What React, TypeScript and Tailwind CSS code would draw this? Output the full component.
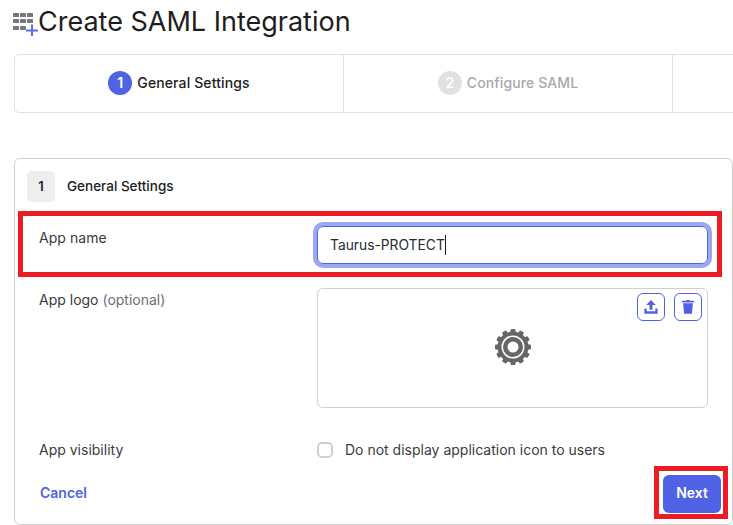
const font = { fontFamily: "Inter, sans-serif" };

function AppsIcon() {
  const cells = [
    [0, 0, 6], [7, 0, 6], [14, 0, 6],
    [0, 6, 6], [7, 6, 6], [14, 6, 6],
    [0, 13, 6], [7, 13, 6],
  ];
  return (
    <svg width="26" height="24" viewBox="0 0 26 24" className="shrink-0">
      {cells.map(([x, y, w], i) => (
        <rect key={i} x={x} y={y + 1} width={w} height="4" rx="0.5" fill="#77777f" />
      ))}
      <path d="M13 17.5h12M19 11.5v12" stroke="#fff" strokeWidth="5" />
      <path d="M13 18.5h12M19 12.5v12" stroke="#5b6be8" strokeWidth="2" />
    </svg>
  );
}

function Gear() {
  const teeth = Array.from({ length: 12 }, (_, i) => i * 30);
  return (
    <svg width="36" height="36" viewBox="0 0 36 36">
      {teeth.map((a) => (
        <rect key={a} x="15.5" y="0" width="5" height="6" rx="1.2" fill="#666" transform={`rotate(${a} 18 18)`} />
      ))}
      <circle cx="18" cy="18" r="15.5" fill="#666" />
      <circle cx="18" cy="18" r="11.5" fill="#fff" />
      <circle cx="18" cy="18" r="10" fill="#666" />
      <circle cx="18" cy="18" r="5.5" fill="#fff" />
    </svg>
  );
}

function UploadIcon() {
  return (
    <svg width="16" height="16" viewBox="0 0 14 14" fill="#4f63e4">
      <path d="M7 .8 11.2 5.2H8.3V9.4H5.7V5.2H2.8Z" />
      <path d="M1.2 8.3H3.2V10.7H10.8V8.3H12.8V12.8H1.2Z" />
    </svg>
  );
}

function TrashIcon() {
  return (
    <svg width="16" height="16" viewBox="0 0 14 14" fill="#4f63e4">
      <path d="M1.8 1.6H5.2L5.7 .8H8.3L8.8 1.6H12.2V3H1.8Z" />
      <path d="M2.8 3.8H11.2L10.5 13H3.5Z" />
    </svg>
  );
}

function Step({ n, label, active }: { n: number; label: string; active?: boolean }) {
  return (
    <div className="flex w-[329px] shrink-0 items-center justify-center gap-[5px] border-r border-[#e1e1e1] pb-[1px]">
      <span
        className={`flex h-6 w-6 items-center justify-center rounded-full text-sm font-semibold text-white ${
          active ? "bg-[#4f63e4]" : "bg-[#e1e1e1]"
        }`}
      >
        {n}
      </span>
      <span className={`text-sm font-medium tracking-[0.12px] ${active ? "text-[#1d1d21]" : "text-[#a7a7ad]"}`}>
        {label}
      </span>
    </div>
  );
}

export default function App() {
  return (
    <div className="relative h-[525px] w-[733px] overflow-hidden bg-white text-[#1d1d21]" style={font}>
      <div className="flex h-[54px] items-start pl-[13px] pt-[6px]">
        <div className="mt-[6px] w-[25px]">
          <AppsIcon />
        </div>
        <h1 className="text-[27px] leading-[32px] font-normal text-[#1d1d21]">Create SAML Integration</h1>
      </div>

      <div className="ml-[14px] flex h-[59px] w-[760px] rounded-[5px] border border-[#e1e1e1]">
        <Step n={1} label="General Settings" active />
        <Step n={2} label="Configure SAML" />
      </div>

      <div className="mt-[45px] ml-[14px] h-[367px] w-[719px] rounded-[6px] border border-[#cfcfcf] pt-3 pl-3 pr-[11px]">
        <div className="flex items-center gap-3">
          <span className="flex h-[31px] w-7 items-center justify-center rounded-[5px] bg-[#eeeeee] text-[13px] font-semibold">1</span>
          <span className="text-[13.5px] font-medium text-[#1d1d21]">General Settings</span>
        </div>

        <div className="mt-[24px] grid grid-cols-[278px_391px] pl-3">
          <label className="text-sm leading-[24px] tracking-[0.05px] text-[#3a3a42]">App name</label>
          <div className="flex h-[38px] items-center rounded-[6px] border border-[#4f63e4] pl-[12px] text-[13.8px] text-[#2a2a33] shadow-[0_0_0_4px_#9ba8ef]">
            <span>Taurus-PROTECT</span>
            <span className="h-[20px] w-px bg-[#1d1d21]" />
          </div>
        </div>

        <div className="mt-6 grid grid-cols-[278px_391px] pl-3">
          <label className="text-sm leading-[24px] text-[#3a3a42]">
            App logo <span className="text-[#6e6e78]">(optional)</span>
          </label>
          <div className="relative flex h-[120px] items-center justify-center rounded-[6px] border border-[#cfcfcf]">
            <div className="absolute top-1 right-[5px] flex gap-[9px]">
              <button className="flex h-7 w-7 items-center justify-center rounded-[6px] border border-[#4f63e4]">
                <UploadIcon />
              </button>
              <button className="flex h-7 w-7 items-center justify-center rounded-[6px] border border-[#4f63e4]">
                <TrashIcon />
              </button>
            </div>
            <div className="mb-[2px]">
              <Gear />
            </div>
          </div>
        </div>

        <div className="mt-[30px] grid grid-cols-[278px_391px] items-center pl-3">
          <label className="text-sm leading-[24px] text-[#3a3a42]">App visibility</label>
          <div className="flex items-center gap-3">
            <span className="h-4 w-4 rounded-[5px] border-2 border-[#cfcfcf]" />
            <span className="text-sm text-[#3a3a42]">Do not display application icon to users</span>
          </div>
        </div>

        <div className="mt-[13px] flex items-center justify-between pl-[13px]">
          <a className="pb-[2px] text-sm font-semibold text-[#4f63e4]">Cancel</a>
          <button className="h-[38px] w-[58px] rounded-[6px] bg-[#4f63e4] pb-[2px] text-sm font-semibold text-white">Next</button>
        </div>
      </div>

      {/* red callouts drawn over the form */}
      <div className="absolute top-[211px] left-[18px] h-[66px] w-[704px] border-[5px] border-[#ed1c24]" />
      <div className="absolute top-[466px] left-[654px] h-[53px] w-[74px] border-[5px] border-[#ed1c24]" />
    </div>
  );
}
